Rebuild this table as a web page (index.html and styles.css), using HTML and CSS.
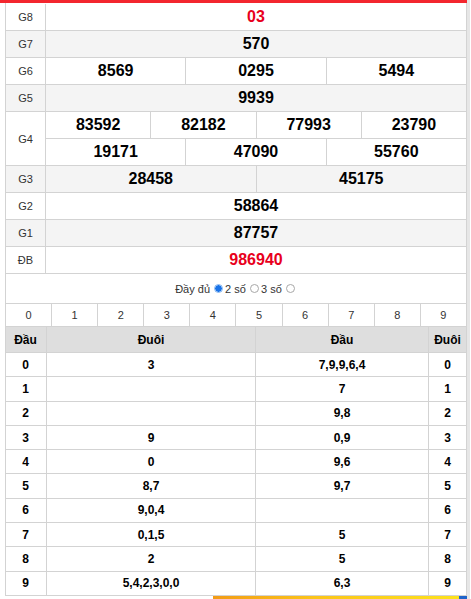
FILE: index.html
```html
<!DOCTYPE html>
<html lang="vi">
<head>
<meta charset="utf-8">
<title>Kết quả xổ số</title>
<link rel="stylesheet" href="styles.css">
</head>
<body>
<div class="page">
  <div class="topbar"></div>
  <div class="result">
    <div class="row"><div class="lbl">G8</div><div class="vals"><div class="v red">03</div></div></div>
    <div class="row alt"><div class="lbl">G7</div><div class="vals"><div class="v">570</div></div></div>
    <div class="row"><div class="lbl">G6</div><div class="vals"><div class="v">8569</div><div class="v">0295</div><div class="v">5494</div></div></div>
    <div class="row alt"><div class="lbl">G5</div><div class="vals"><div class="v">9939</div></div></div>
    <div class="row"><div class="lbl">G4</div>
      <div class="vals col">
        <div class="sub"><div class="v">83592</div><div class="v">82182</div><div class="v">77993</div><div class="v">23790</div></div>
        <div class="sub"><div class="v">19171</div><div class="v">47090</div><div class="v">55760</div></div>
      </div>
    </div>
    <div class="row alt"><div class="lbl">G3</div><div class="vals"><div class="v">28458</div><div class="v">45175</div></div></div>
    <div class="row"><div class="lbl">G2</div><div class="vals"><div class="v">58864</div></div></div>
    <div class="row alt"><div class="lbl">G1</div><div class="vals"><div class="v">87757</div></div></div>
    <div class="row"><div class="lbl">ĐB</div><div class="vals"><div class="v red">986940</div></div></div>
  </div>
  <div class="loto">
    <div class="opts">Đầy đủ <span class="radio on"></span>2 số <span class="radio"></span>3 số <span class="radio"></span></div>
    <div class="digits"><span>0</span><span>1</span><span>2</span><span>3</span><span>4</span><span>5</span><span>6</span><span>7</span><span>8</span><span>9</span></div>
    <div class="dd head"><div>Đầu</div><div>Đuôi</div><div>Đầu</div><div>Đuôi</div></div>
    <div class="dd"><div>0</div><div>3</div><div>7,9,9,6,4</div><div>0</div></div>
    <div class="dd"><div>1</div><div></div><div>7</div><div>1</div></div>
    <div class="dd"><div>2</div><div></div><div>9,8</div><div>2</div></div>
    <div class="dd"><div>3</div><div>9</div><div>0,9</div><div>3</div></div>
    <div class="dd"><div>4</div><div>0</div><div>9,6</div><div>4</div></div>
    <div class="dd"><div>5</div><div>8,7</div><div>9,7</div><div>5</div></div>
    <div class="dd"><div>6</div><div>9,0,4</div><div></div><div>6</div></div>
    <div class="dd"><div>7</div><div>0,1,5</div><div>5</div><div>7</div></div>
    <div class="dd"><div>8</div><div>2</div><div>5</div><div>8</div></div>
    <div class="dd"><div>9</div><div>5,4,2,3,0,0</div><div>6,3</div><div>9</div></div>
  </div>
  <div class="banner"></div>
</div>
</body>
</html>
```

FILE: styles.css
```css
* { box-sizing: border-box; }
body {
  margin: 0;
  background: #fff;
  font-family: "Liberation Sans", Arial, sans-serif;
  color: #000;
}
.page {
  width: 470px;
  border-right: 3px solid #e6e6e6;
}
.topbar {
  height: 3px;
  background: #f3262e;
}
.result {
  margin-left: 5px;
  width: 462px;
  border-left: 1px solid #d3d3d3;
  border-right: 1px solid #d3d3d3;
  padding-top: 1px;
}
.row {
  display: flex;
  border-bottom: 1px solid #d3d3d3;
}
.row.alt { background: #f4f4f4; }
.lbl {
  width: 40px;
  flex: none;
  border-right: 1px solid #d3d3d3;
  display: flex;
  align-items: center;
  justify-content: center;
  font-size: 11px;
  color: #333;
}
.vals {
  flex: 1;
  display: flex;
}
.vals.col { flex-direction: column; }
.sub { display: flex; }
.sub + .sub { border-top: 1px solid #d3d3d3; }
.v {
  flex: 1 1 0;
  height: 26px;
  display: flex;
  align-items: center;
  justify-content: center;
  font-weight: bold;
  font-size: 16px;
}
.v + .v { border-left: 1px solid #d3d3d3; }
.red { color: #e8001c; }

.loto {
  margin-left: 5px;
  width: 462px;
  border-left: 1px solid #d3d3d3;
  border-right: 1px solid #d3d3d3;
}
.opts {
  height: 30px;
  border-bottom: 1px solid #d3d3d3;
  display: flex;
  align-items: center;
  justify-content: center;
  font-size: 11px;
  color: #333;
  white-space: pre;
}
.radio {
  display: inline-block;
  width: 9px;
  height: 9px;
  border: 1px solid #a8a8a8;
  border-radius: 50%;
  background: #fff;
  margin: 0 2px 0 1px;
}
.radio.on {
  border-color: #7fb2f0;
  background: radial-gradient(circle, #1a73e8 0 3px, #dbe9fb 3.5px);
}
.digits {
  display: flex;
  height: 23px;
  border-bottom: 1px solid #d3d3d3;
}
.digits span {
  flex: 1 1 0;
  display: flex;
  align-items: center;
  justify-content: center;
  font-size: 11px;
  color: #333;
}
.digits span + span { border-left: 1px solid #d3d3d3; }
.dd {
  display: grid;
  grid-template-columns: 40px 209px 173px 1fr;
  height: 24.3px;
  border-bottom: 1px solid #d3d3d3;
  font-size: 12px;
  font-weight: bold;
}
.dd > div {
  display: flex;
  align-items: center;
  justify-content: center;
}
.dd > div + div { border-left: 1px solid #d3d3d3; }
.dd > div:first-child { width: 39px; }
.dd.head {
  height: 26px;
  background: #dedede;
}
.banner {
  margin-left: 213px;
  height: 3px;
  background: linear-gradient(90deg, #f29b16 0, #fbc419 40%, #fde21c 97%, #1e63c9 97%);
}
```
